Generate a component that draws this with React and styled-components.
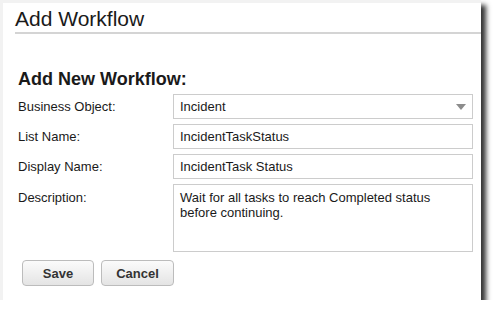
import React from "react";
import styled, { createGlobalStyle } from "styled-components";

const Global = createGlobalStyle`
  html, body { margin: 0; padding: 0; background: #ffffff; }
  body { font-family: "Liberation Sans", Arial, sans-serif; }
  * { box-sizing: border-box; }
`;

const Dialog = styled.div`
  width: 481px;
  height: 300px;
  background: #ffffff;
  border-top: 3px solid #f2f2f2;
  border-left: 3px solid #f2f2f2;
  box-shadow: 5px 5px 5px rgba(0, 0, 0, 0.8);
  display: flex;
  flex-direction: column;
`;

const Header = styled.div`
  margin-left: 12px;
  padding-top: 4px;
  padding-bottom: 1px;
  border-bottom: 2px solid #d4d4d4;
`;

const Title = styled.h1`
  margin: 0;
  font-family: "Liberation Sans", Arial, sans-serif;
  font-weight: normal;
  font-size: 21px;
  line-height: 24px;
  color: #1a1a1a;
`;

const Body = styled.div`
  padding: 35px 8px 0 15px;
  display: flex;
  flex-direction: column;
`;

const Heading = styled.h2`
  margin: 0 0 5px 0;
  font-family: "Liberation Sans", Arial, sans-serif;
  font-weight: bold;
  font-size: 18px;
  line-height: 20px;
  color: #1a1a1a;
`;

const Form = styled.div`
  display: grid;
  grid-template-columns: 155px 300px;
  row-gap: 5px;
`;

const Label = styled.label`
  font-size: 13px;
  line-height: 15px;
  color: #1a1a1a;
  padding-top: ${(p) => (p.$top ? "6px" : "0")};
  align-self: ${(p) => (p.$top ? "start" : "center")};
`;

const fieldBase = `
  width: 300px;
  border: 1px solid #cccccc;
  background: #ffffff;
  font-family: "Liberation Sans", Arial, sans-serif;
  font-size: 13px;
  color: #1a1a1a;
  outline: none;
`;

const SelectBox = styled.div`
  ${fieldBase}
  height: 25px;
  display: flex;
  align-items: center;
  justify-content: space-between;
  padding: 0 6px 0 6px;
`;

const TextInput = styled.input`
  ${fieldBase}
  height: 25px;
  padding: 0 6px;
  margin: 0;
`;

const TextArea = styled.textarea`
  ${fieldBase}
  height: 68px;
  padding: 5px 6px;
  margin: 0;
  line-height: 15px;
  resize: none;
  display: block;
`;

const Buttons = styled.div`
  display: flex;
  gap: 7px;
  margin-top: 8px;
  padding-left: 4px;
`;

const Button = styled.button`
  width: ${(p) => p.$w}px;
  height: 26px;
  border: 1px solid #bcbcbc;
  border-radius: 4px;
  background: linear-gradient(#fbfbfb, #e4e4e4);
  font-family: "Liberation Sans", Arial, sans-serif;
  font-weight: bold;
  font-size: 13px;
  color: #333333;
  padding: 0;
`;

const Arrow = () => (
  <svg width="10" height="6" viewBox="0 0 10 6">
    <path d="M0 0 L10 0 L5 6 Z" fill="#8c8c8c" />
  </svg>
);

export default function App() {
  return (
    <>
      <Global />
      <Dialog>
        <Header>
          <Title>Add Workflow</Title>
        </Header>
        <Body>
          <Heading>Add New Workflow:</Heading>
          <Form>
            <Label>Business Object:</Label>
            <SelectBox>
              <span>Incident</span>
              <Arrow />
            </SelectBox>
            <Label>List Name:</Label>
            <TextInput readOnly value="IncidentTaskStatus" />
            <Label>Display Name:</Label>
            <TextInput readOnly value="IncidentTask Status" />
            <Label $top>Description:</Label>
            <TextArea
              readOnly
              value="Wait for all tasks to reach Completed status before continuing."
            />
          </Form>
          <Buttons>
            <Button $w={72}>Save</Button>
            <Button $w={73}>Cancel</Button>
          </Buttons>
        </Body>
      </Dialog>
    </>
  );
}
